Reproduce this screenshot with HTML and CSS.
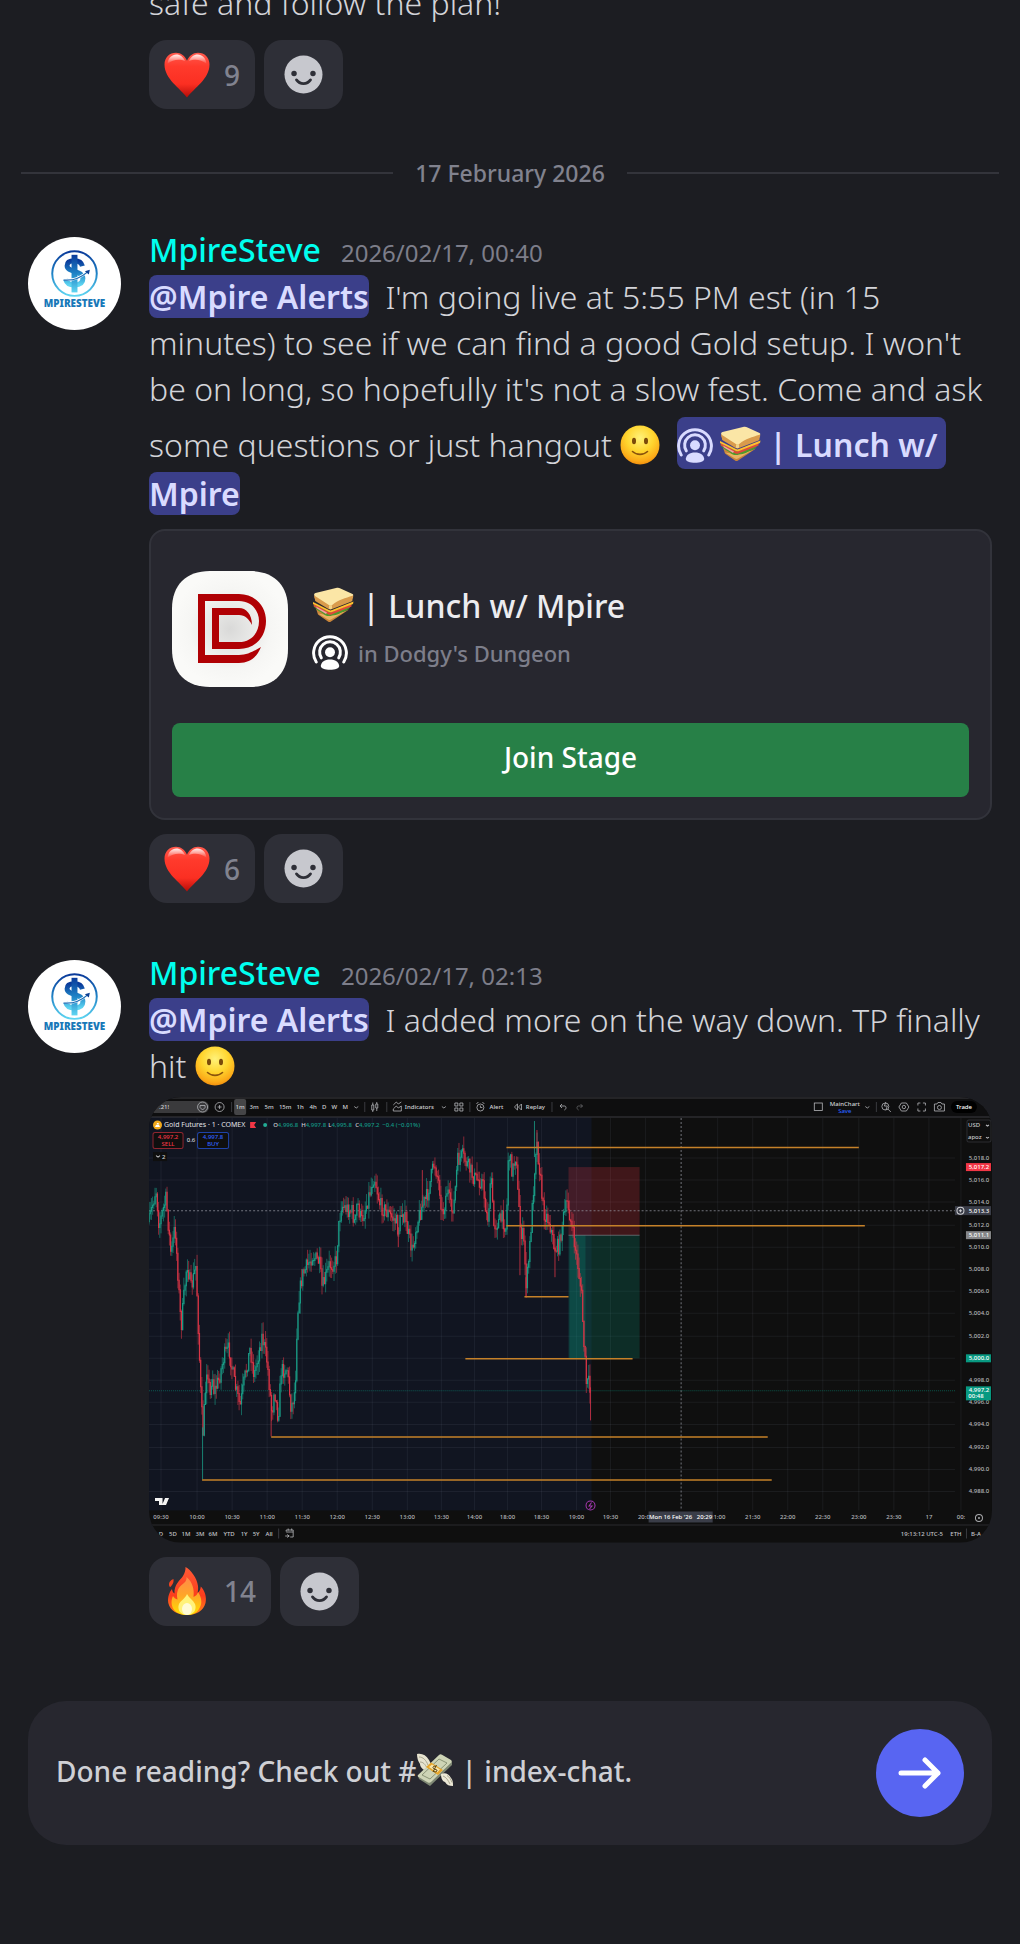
FILE: index.html
```html
<!DOCTYPE html>
<html lang="en">
<head>
  <meta charset="UTF-8">
  <meta name="viewport" content="width=device-width, initial-scale=1.0">
  <title>Mpire Alerts</title>
  <link rel="stylesheet" href="styles.css">
</head>
<body>
  <!-- shared icons -->
  <svg class="sprite" aria-hidden="true">
    <defs>
      <linearGradient id="brand" x1="0" y1="0" x2="0" y2="1">
        <stop offset="0" stop-color="#0a3a9a"/>
        <stop offset=".5" stop-color="#1f83c6"/>
        <stop offset="1" stop-color="#5fd6f2"/>
      </linearGradient>
      <linearGradient id="heartFill" x1="0" y1="0" x2="0" y2="1">
        <stop offset="0" stop-color="#ff5a4d"/>
        <stop offset=".3" stop-color="#ff3a2c"/>
        <stop offset=".7" stop-color="#fb2f22"/>
        <stop offset="1" stop-color="#b50d08"/>
      </linearGradient>
      <linearGradient id="shine" x1="0" y1="0" x2="0" y2="1">
        <stop offset="0" stop-color="#fff" stop-opacity=".9"/>
        <stop offset="1" stop-color="#fff" stop-opacity="0"/>
      </linearGradient>
      <radialGradient id="smileFill" cx=".5" cy=".32" r=".7">
        <stop offset="0" stop-color="#fff27a"/>
        <stop offset=".5" stop-color="#ffd52e"/>
        <stop offset=".85" stop-color="#fba918"/>
        <stop offset="1" stop-color="#ef8a0c"/>
      </radialGradient>
      <linearGradient id="flameFill" x1="0" y1="0" x2="0" y2="1">
        <stop offset="0" stop-color="#ff5a36"/>
        <stop offset=".6" stop-color="#fb3d1c"/>
        <stop offset="1" stop-color="#ff8a1c"/>
      </linearGradient>
      <linearGradient id="flameInner" x1="0" y1="0" x2="0" y2="1">
        <stop offset="0" stop-color="#ff8a4a"/>
        <stop offset=".5" stop-color="#ffa726"/>
        <stop offset="1" stop-color="#ffe100"/>
      </linearGradient>
      <radialGradient id="tile">
        <stop offset="0" stop-color="#d9d9d8"/>
        <stop offset=".7" stop-color="#f6f6f4"/>
        <stop offset="1" stop-color="#fafaf8"/>
      </radialGradient>
    </defs>

    <symbol id="heart" viewBox="0 0 46 46">
      <path fill="url(#heartFill)" d="M23 45.500C16 36 .500 27 .500 12.500.500 5.500 5.500.800 12 .800c5 0 9 3.200 11 8 2-4.800 6-8 11-8 6.500 0 11.500 4.700 11.500 11.700C45.500 27 30 36 23 45.500z"/>
      <path fill="url(#shine)" d="M3.500 12C4 6 8 2.500 12.300 2.500c4 0 7 2.500 8.700 6.500-5-2-12-2-17.500 3zM42.500 12C42 6 38 2.500 33.700 2.500c-4 0-7 2.500-8.700 6.500 5-2 12-2 17.500 3z"/>
    </symbol>

    <symbol id="flame" viewBox="0 0 40 50">
      <path fill="url(#flameFill)" d="M18.500 1C24 4 30 12 31 20c.3 3 0 5-.5 7 2-1.500 3.200-4 3.300-6.500C37.500 24 40 31 38.500 37 36.500 45 29 49 20 49S3 45 1.300 37C.300 31 2.500 26 5 23c.3 2 1 3.500 2.500 4.500C7 18 13 14.500 16 10c1.800-3 2.700-6 2.500-9z"/>
      <path fill="#f4441f" d="M6.500 13c.3 3-.3 4-1.500 6s-2 2.500-2.500 1.500C1 17 3.500 14 6.500 13z"/>
      <path fill="url(#flameInner)" d="M19.500 11c6 5 8 12 7 20 2.500-1 4-3 4.500-5 4 6 4.500 12 1 17-2.500 4-7 6-12 6S9 47 6.500 43C4 39 4 34 6 30c1 2 2.500 3 4.500 3.500C8.500 24 13 20 17 17c2-1.700 2.700-3.700 2.500-6z"/>
      <path fill="#fff27a" d="M20 28c2 4 6 6 8 10 2 5-1 11-8 11s-10-6-8-11c2-4 6-5 8-10z"/>
      <ellipse cx="20" cy="43" rx="5" ry="6" fill="#fffbd6"/>
    </symbol>

    <symbol id="smile" viewBox="0 0 40 40">
      <circle cx="20" cy="20" r="19.500" fill="url(#smileFill)"/>
      <ellipse cx="14" cy="16" rx="2" ry="3.200" fill="#7a4a0a"/>
      <ellipse cx="26" cy="16" rx="2" ry="3.200" fill="#7a4a0a"/>
      <path d="M12.500 26.500c4 3.800 11 3.800 15 0" fill="none" stroke="#8a530c" stroke-width="1.600" stroke-linecap="round"/>
    </symbol>

    <symbol id="sandwich" viewBox="0 0 42 35">
      <path fill="#c9853a" d="M4 21l13 8 20-7-18 12c-1 .8-2 .8-3 0L6 27z"/>
      <path fill="#e8b463" d="M6 26l10 6c1 .6 2 .6 3 0l14-8-15 4z"/>
      <path fill="#4f9a2c" d="M1 18c4 5 7 6 10 8 3 3 6 3 9 2 5 0 9-3 12-4 3-1 6-3 7-6l-20 6z"/>
      <path fill="#e0483a" d="M1.500 16.500l15 8c1 .6 2 .6 3 0l20-8v2.500l-20 8c-1 .5-2 .4-3 0L2 19z"/>
      <path fill="#f2a3a0" d="M4 19l11 6-1 1.500L5 21z"/>
      <path fill="#ffc02e" d="M1 14.500l16 8c1 .5 2 .5 3 0L41.500 14l-.5 2.500-21 8c-1 .4-2 .3-3 0L1 16.500z"/>
      <path fill="#d99b4c" d="M2.500 7c-1 2 0 3.500.5 5 0 1 0 1.500 1 2l12.500 7.500c1 .6 2 .6 3 .2L39.500 14c1-.5 1-1 1-2 .8-2 .8-3.500.5-5L17 13z"/>
      <path fill="#fbe6a6" d="M3.500 5.500L24 .500c2-.5 3-.3 4.500.5l12 5.500c1 .6 1 1.300 0 1.800-7 2.200-14 4-20 9-1.500 1.200-2.500 1.200-4 0L3 8.500c-1.500-1.200-1-2.600.5-3z"/>
      <path fill="#f3d384" d="M17 17.800v3.500c1 .6 2 .5 3 0v-3.800c-1 .8-2 .9-3 .3z"/>
    </symbol>

    <symbol id="money" viewBox="0 0 38 34">
      <path fill="#e7e3cf" d="M1 1c5-1 9 1 12 6l3 6-5 5C7 17 4 14 4 11 2 8 1 5 1 1z"/>
      <path d="M3 4c4 0 7 3 9 8M4 9c3 0 5 2 7 6" fill="none" stroke="#a9a68f" stroke-width="1"/>
      <path fill="#7f8874" d="M2 23L24 3l12 6v3L14 33 3 26z"/>
      <path fill="#ced4b6" d="M2 22L23 2c1-1 2-1 3-.3L35 7c1 1 1 1.600.3 2.400L15 29c-1 1-2 1-3 .4L2.500 24C1.500 23.500 1.500 22.600 2 22z"/>
      <path d="M6 22L23 6l8 4-17 16z" fill="none" stroke="#8b9577" stroke-width="1"/>
      <path fill="#e8a62a" d="M10 14l5-4.500L27 17l-5 5z"/>
      <path fill="#f6e6ac" d="M13 14l3-2.500 8 5-3 3z"/>
      <path d="M20 13.500c-2-1-4 .5-2.500 2 1.500 1.200 4 .8 3.500 2.500-.6 1.400-3 1-4 0M20.500 12l-3.500 7" fill="none" stroke="#5b4413" stroke-width="1"/>
      <path fill="#ece8d6" d="M25 21c4-2 8 0 10 4 2 2 2 5 2 8-4 0-6-1-8-4-3-1-4-4-4-8z"/>
      <path d="M27 23c3 1 5 4 7 8M31 22.500c2 1 4 4 5 7" fill="none" stroke="#a9a68f" stroke-width="1"/>
    </symbol>

    <symbol id="stage" viewBox="0 0 34 34">
      <path d="M4 26.500A15.500 15.500 0 1 1 30 26.500" fill="none" stroke="currentColor" stroke-width="2.800" stroke-linecap="round"/>
      <path d="M8.800 22.500A9.800 9.800 0 1 1 25.200 22.500" fill="none" stroke="currentColor" stroke-width="2.800" stroke-linecap="round"/>
      <circle cx="17" cy="17.300" r="4.700" fill="currentColor"/>
      <path fill="currentColor" d="M8.300 30c.6-3.800 3.500-6 8.700-6s8.100 2.200 8.700 6c.2 2.500-4 3.800-8.700 3.800S8.100 32.500 8.300 30z"/>
    </symbol>

    <symbol id="addReaction" viewBox="0 0 40 40">
      <circle cx="20" cy="20" r="19.500" fill="#c7c8ce"/>
      <circle cx="10.300" cy="19" r="2.800" fill="#2e2f37"/>
      <circle cx="29.700" cy="19" r="2.800" fill="#2e2f37"/>
      <path d="M12.800 25.500c3.500 5 10.900 5 14.400 0" fill="none" stroke="#2e2f37" stroke-width="2.800" stroke-linecap="round"/>
    </symbol>

    <symbol id="logo" viewBox="0 0 94 94">
      <circle cx="47" cy="47" r="47" fill="#fff"/>
      <circle cx="47" cy="37" r="22.500" fill="none" stroke="url(#brand)" stroke-width="2"/>
      <path d="M55 29.500c-1-4-4-5.500-8-5.500-5 0-7.500 2-7.500 5 0 7 16 4.500 16 13 0 4.500-3.500 6.500-8.500 6.500-5 0-8-2-9-6" fill="none" stroke="url(#brand)" stroke-width="5"/>
      <path d="M44 18h6v38h-6z" fill="url(#brand)"/>
      <path d="M36 42.500c9 2 17-1 24-7.500" fill="none" stroke="#fff" stroke-width="2.500"/>
      <path d="M36 43.500c9 1 17-2 24-8" fill="none" stroke="#1668b4" stroke-width="1.300"/>
      <path d="M57.500 34.500l5-1.500-1 5z" fill="#0c3f94"/>
      <text x="47" y="71" text-anchor="middle" class="logo-text">MPIRESTEVE</text>
    </symbol>
  </svg>

  <main class="feed">
    <article class="message first">
      <div class="content">
        <p class="text">safe and follow the plan!</p>
        <div class="reactions">
          <button class="chip"><svg class="heart" role="img" aria-label="heart"><use href="#heart"/></svg>9</button>
          <button class="chip add" aria-label="Add reaction"><svg class="face"><use href="#addReaction"/></svg></button>
        </div>
      </div>
    </article>

    <div class="divider"><span>17 February 2026</span></div>

    <article class="message">
      <svg class="avatar" role="img" aria-label="MpireSteve"><use href="#logo"/></svg>
      <div class="content">
        <header><span class="name">MpireSteve</span><time>2026/02/17, 00:40</time></header>
        <p class="text"><a href="#" class="mention">@Mpire Alerts</a>&nbsp; I'm going live at 5:55 PM est (in 15 minutes) to see if we can find a good Gold setup. I won't be on long, so hopefully it's not a slow fest. Come and ask some questions or just hangout <svg class="emoji" role="img" aria-label="slight smile"><use href="#smile"/></svg>&nbsp; <a href="#"><span class="mention channel"><svg class="stage"><use href="#stage"/></svg><svg class="sandwich" role="img" aria-label="sandwich"><use href="#sandwich"/></svg> | Lunch w/</span> <span class="mention">Mpire</span></a></p>

        <section class="card">
          <div class="card-top">
            <svg class="tile" viewBox="0 0 116 116" role="img" aria-label="Dodgy's Dungeon">
              <path fill="url(#tile)" d="M38 0h40c24 0 38 14 38 38v40c0 24-14 38-38 38H38C14 116 0 102 0 78V38C0 14 14 0 38 0z"/>
              <path fill="#b00004" d="M26 23h41c16 0 27 12 27 27 0 16-11 28-27 28H40V37h27c7 0 13 6 13 17-3-6-7-10-13-10H47v27h20c12 0 20-9 20-21 0-11-8-20-20-20H33v54h34c9 0 15-4 22-8-4 10-11 16-22 16H26z"/>
            </svg>
            <div class="card-info">
              <h2><svg class="sandwich" role="img" aria-label="sandwich"><use href="#sandwich"/></svg> | Lunch w/ Mpire</h2>
              <p><svg class="stage"><use href="#stage"/></svg>in Dodgy's Dungeon</p>
            </div>
          </div>
          <button class="join">Join Stage</button>
        </section>

        <div class="reactions">
          <button class="chip"><svg class="heart" role="img" aria-label="heart"><use href="#heart"/></svg>6</button>
          <button class="chip add" aria-label="Add reaction"><svg class="face"><use href="#addReaction"/></svg></button>
        </div>
      </div>
    </article>

    <article class="message">
      <svg class="avatar" role="img" aria-label="MpireSteve"><use href="#logo"/></svg>
      <div class="content">
        <header><span class="name">MpireSteve</span><time>2026/02/17, 02:13</time></header>
        <p class="text"><a href="#" class="mention">@Mpire Alerts</a>&nbsp; I added more on the way down. TP finally hit <svg class="emoji" role="img" aria-label="slight smile"><use href="#smile"/></svg></p>

        <svg class="chart" id="chart" viewBox="0 0 842 445" role="img" aria-label="Gold Futures chart">
          <rect width="842" height="445" fill="#0f0f0f"/>
          <rect y="20" width="442" height="393" fill="#111521"/>
          <g id="grid" stroke="#8a93a8" stroke-opacity=".1"></g>
          <rect x="419" y="70" width="71" height="68" fill="#f23645" fill-opacity=".22"/>
          <rect x="419" y="138" width="71" height="123" fill="#089981" fill-opacity=".22"/>
          <rect x="420" y="138" width="16" height="123" fill="#089981" fill-opacity=".22"/>
          <path d="M419 138h71" stroke="#8a8d96" stroke-opacity=".6"/>
          <path d="M0 293.500h805" stroke="#089981" stroke-opacity=".5" stroke-dasharray="1 1"/>
          <path d="M0 113.500h805M531.500 21v392" stroke="#9a9da6" stroke-opacity=".7" stroke-dasharray="2 2"/>
          <g id="candles"></g>
          <path d="M357 50.500h352M357 128.500h358M375 199.500h44M316 261.500h167M122 339.500h496M53 382.500h569" stroke="#c58129" stroke-width="1.500"/>

          <!-- toolbar -->
          <rect width="842" height="20" fill="#0e0e0f"/>
          <path d="M0 1h842M0 20h842" stroke="#3a3b40"/>
          <rect x="-20" y="4" width="80" height="12" rx="6" fill="#3a3a3c"/>
          <rect x="85" y="2" width="12" height="16" rx="2" fill="#454547"/>
          <path d="M82.500 5v10M215.500 5v10M237.500 5v10M320.500 5v10M402.500 5v10M726.500 5v10" stroke="#3a3b40"/>
          <g fill="none" stroke="#b5b6ba" stroke-width=".8">
            <circle cx="53.500" cy="10" r="5"/>
            <path d="M51 8.500h5v2l-2.500 2.500-2.500-2.500z"/>
            <circle cx="70.500" cy="10" r="4.500"/>
            <path d="M68.500 10h4M70.500 8v4M205 9.500l2 1.500 2-1.500M292.500 9.500l2 1.500 2-1.500M715.500 9.500l2 1.500 2-1.500"/>
            <path d="M222.500 8h2v5h-2zM223.500 5.500V8m0 5v2M226.500 7h2v4h-2zM227.500 5v2m0 4v3"/>
            <path d="M244 14h8V9l-3 2-2-2-3 3zM244 8l3-3 2 2 3-2"/>
            <path d="M305.500 6h3v3h-3zM310.500 6h3v3h-3zM305.500 11h3v3h-3zM310.500 11h3v3h-3z"/>
            <circle cx="331" cy="10.500" r="3.500"/>
            <path d="M331 8.500v2h2M327 7l2-2M335 7l-2-2M368 7l-3 3 3 3zM372 7l-3 3 3 3zM411 9h4c2 0 2 3 0 4M412.500 7l-2 2 2 2"/>
            <path d="M433 9h-4c-2 0-2 3 0 4M431 7l2 2-2 2" stroke-opacity=".5"/>
            <rect x="664.500" y="6" width="8" height="7.500"/>
            <circle cx="735.500" cy="9.500" r="3.500"/>
            <path d="M738 12l3 3M736 5l-1.500 4h3l-1.500 4"/>
            <path d="M751.500 6h5l2.500 4-2.500 4h-5L749 10z"/>
            <circle cx="754" cy="10" r="1.700"/>
            <path d="M768 8.500V6h2.500M773 6h2.500v2.500M775.500 11.500V14H773M770.500 14H768v-2.500"/>
            <path d="M784.500 7h2.500l1-1.500h3l1 1.500h2.500v7h-10z"/>
            <circle cx="789.500" cy="10.500" r="2"/>
          </g>
          <rect x="801" y="4" width="26" height="12" rx="6" fill="#000"/>
          <g class="tiny" fill="#d0d1d4">
            <text x="10" y="12">.21!</text>
            <text x="91" y="12" text-anchor="middle">1m</text>
            <text x="105" y="12" text-anchor="middle">3m</text>
            <text x="120" y="12" text-anchor="middle">5m</text>
            <text x="136" y="12" text-anchor="middle">15m</text>
            <text x="151" y="12" text-anchor="middle">1h</text>
            <text x="164" y="12" text-anchor="middle">4h</text>
            <text x="175" y="12" text-anchor="middle">D</text>
            <text x="185" y="12" text-anchor="middle">W</text>
            <text x="196" y="12" text-anchor="middle">M</text>
            <text x="270" y="12" text-anchor="middle">Indicators</text>
            <text x="347" y="12" text-anchor="middle">Alert</text>
            <text x="386" y="12" text-anchor="middle">Replay</text>
            <text x="695" y="9" text-anchor="middle">MainChart</text>
            <text x="695" y="16" text-anchor="middle" fill="#2962ff">Save</text>
            <text x="814" y="12" text-anchor="middle" fill="#fff">Trade</text>
          </g>

          <!-- symbol line -->
          <circle cx="8.500" cy="28" r="4.500" fill="#f0a81c"/>
          <path d="M6 30l1-2h3l1 2zM7.500 27.500l.5-1.500h1.500l.5 1.500z" fill="#fff"/>
          <text x="15" y="30" class="symbol" fill="#e2e3e6">Gold Futures · 1 · COMEX</text>
          <path d="M101 25h6l-2 3 2 3h-6z" fill="#f23645"/>
          <circle cx="116" cy="28" r="2" fill="#22ab94"/>
          <g class="tiny" fill="#139783">
            <text x="124" y="30"><tspan fill="#d0d1d4">O</tspan>4,996.8</text>
            <text x="152" y="30"><tspan fill="#d0d1d4">H</tspan>4,997.8</text>
            <text x="179" y="30"><tspan fill="#d0d1d4">L</tspan>4,995.8</text>
            <text x="206" y="30"><tspan fill="#d0d1d4">C</tspan>4,997.2</text>
            <text x="233" y="30">−0.4 (−0.01%)</text>
          </g>
          <rect x="4" y="35.500" width="30" height="16" rx="2" fill="#0f0f0f" stroke="#8f2630"/>
          <rect x="48.500" y="35.500" width="31" height="16" rx="2" fill="#0f0f0f" stroke="#1f43a8"/>
          <g class="tiny" text-anchor="middle">
            <text x="19" y="42" fill="#f23645">4,997.2</text>
            <text x="19" y="49" fill="#f23645">SELL</text>
            <text x="64" y="42" fill="#2f62ff">4,997.8</text>
            <text x="64" y="49" fill="#2f62ff">BUY</text>
            <text x="42" y="45" fill="#d0d1d4">0.6</text>
          </g>
          <rect x="4" y="55" width="14" height="9" fill="#0f0f0f"/>
          <path d="M7 58.500l2 1.500 2-1.500" fill="none" stroke="#c5c6ca"/>
          <text x="13" y="62" class="tiny" fill="#d0d1d4">2</text>

          <path fill="#f4f4f4" d="M6 400.500h7.500v7H10v-4H6zM16 400.500h4l-3 7h-4l2-4.500z"/>
          <circle cx="441" cy="408" r="4.500" fill="#111" stroke="#a63ab5"/>
          <path d="M442 405l-2.500 3.500h3l-2.500 3" fill="none" stroke="#a63ab5"/>

          <!-- price and time scales -->
          <g id="prices" class="tiny" text-anchor="middle" fill="#b4b5b9"></g>
          <rect x="817" y="23" width="24" height="22" rx="2" fill="none" stroke="#2c2d31"/>
          <g class="tiny" fill="#c8c9cc">
            <text x="818" y="30">USD</text>
            <text x="818" y="42">apoz</text>
          </g>
          <path d="M836 28l1.500 1 1.500-1M836 40l1.500 1 1.500-1" fill="none" stroke="#b5b6ba"/>
          <rect x="816" y="66" width="25" height="8" fill="#f23645"/>
          <rect x="805" y="109" width="36" height="9" fill="#3a3d48"/>
          <rect x="816" y="134" width="25" height="8" fill="#858688"/>
          <rect x="816" y="257" width="25" height="8" fill="#089981"/>
          <rect x="816" y="289" width="25" height="14" fill="#089981"/>
          <circle cx="810.500" cy="113.500" r="3.500" fill="none" stroke="#d0d1d4"/>
          <path d="M809 113.500h3M810.500 112v3" stroke="#d0d1d4"/>
          <g class="tiny" text-anchor="middle" fill="#fff">
            <text x="829" y="72">5,017.2</text>
            <text x="829" y="116">5,013.3</text>
            <text x="829" y="140">5,011.1</text>
            <text x="829" y="263">5,000.0</text>
            <text x="829" y="295">4,997.2</text>
            <text x="826" y="301">00:48</text>
          </g>
          <path d="M0 427.500h842" stroke="#2a2b2f"/>
          <g id="times" class="tiny" text-anchor="middle" fill="#b4b5b9"></g>
          <rect x="499" y="414" width="64" height="11" fill="#3a3d48"/>
          <text x="531" y="422" text-anchor="middle" class="tiny" fill="#fff">Mon 16 Feb '26 &#160; 20:29</text>
          <circle cx="829" cy="420.500" r="3.500" fill="none" stroke="#a9aaad"/>
          <circle cx="829" cy="420.500" r="1" fill="#a9aaad"/>
          <g class="tiny" fill="#c3c4c8" text-anchor="middle">
            <text x="12" y="438">D</text>
            <text x="24" y="438">5D</text>
            <text x="37" y="438">1M</text>
            <text x="51" y="438">3M</text>
            <text x="64" y="438">6M</text>
            <text x="80" y="438">YTD</text>
            <text x="95" y="438">1Y</text>
            <text x="107" y="438">5Y</text>
            <text x="120" y="438">All</text>
            <text x="772" y="438">19:13:12 UTC-5</text>
            <text x="806" y="438">ETH</text>
            <text x="826" y="438">B-A</text>
          </g>
          <path d="M129.500 431v10M816.500 431v10" stroke="#3a3b40"/>
          <path d="M137 434v-1.500h7v7h-3M137 434.500h7M139 431v2M142.500 431v2M136 438.500h4M138 437l2 1.500-2 1.500" fill="none" stroke="#b5b6ba" stroke-width=".8"/>
        </svg>

        <div class="reactions">
          <button class="chip"><svg class="flame" role="img" aria-label="fire"><use href="#flame"/></svg>14</button>
          <button class="chip add" aria-label="Add reaction"><svg class="face"><use href="#addReaction"/></svg></button>
        </div>
      </div>
    </article>
  </main>

  <footer class="next">
    <p>Done reading? Check out #<svg class="money" role="img" aria-label="money with wings"><use href="#money"/></svg> | index-chat.</p>
    <button class="go" aria-label="Go to index-chat">
      <svg viewBox="0 0 44 32"><path d="M3 16h37M27 3l13 13-13 13" fill="none" stroke="#fff" stroke-width="5" stroke-linecap="round" stroke-linejoin="round"/></svg>
    </button>
  </footer>

  <script>
    const ns = 'http://www.w3.org/2000/svg'
    const add = (parent, tag, attrs, text) => {
      const el = document.createElementNS(ns, tag)
      for (const key in attrs) el.setAttribute(key, attrs[key])
      if (text) el.textContent = text
      document.getElementById(parent).append(el)
    }

    // time scale
    const times = [
      [12, '09:30'], [48, '10:00'], [83, '10:30'], [118, '11:00'], [153, '11:30'], [188, '12:00'],
      [223, '12:30'], [258, '13:00'], [292, '13:30'], [325, '14:00'], [358, '18:00'], [392, '18:30'],
      [427, '19:00'], [461, '19:30'], [496, '20:00'], [568, '21:00'], [603, '21:30'], [638, '22:00'],
      [673, '22:30'], [709, '23:00'], [744, '23:30'], [779, '17'], [811, '00:']
    ]
    for (const [x, label] of times) {
      add('grid', 'path', { d: `M${x} 21v392` })
      add('times', 'text', { x, y: 422 }, label)
    }

    // price scale, 2 points a step
    for (let i = 0; i < 16; i++) {
      const y = Math.round(61 + i * 22.2)
      add('grid', 'path', { d: `M0 ${y}h805` })
      // 5,000.0 has its own tag
      if (i !== 9) add('prices', 'text', { x: 829, y: y + 2 }, (5018 - i * 2).toLocaleString('en-US') + '.0')
    }

    // price path: x, y
    const points = [
      [0, 124], [7, 91], [10, 128], [17, 101], [22, 158], [26, 128], [32, 230], [38, 164], [42, 191], [47, 168],
      [49, 224], [52, 304], [54, 334], [58, 264], [61, 301], [63, 274], [65, 294], [70, 281], [75, 258], [80, 251],
      [85, 284], [91, 309], [95, 284], [101, 251], [105, 278], [113, 238], [118, 264], [123, 318], [125, 288],
      [129, 321], [132, 273], [138, 271], [142, 311], [146, 291], [148, 221], [150, 198], [153, 178], [163, 158],
      [170, 164], [173, 191], [180, 168], [187, 164], [189, 134], [192, 108], [203, 114], [206, 128], [208, 104],
      [212, 124], [217, 108], [225, 78], [231, 108], [237, 114], [247, 124], [249, 134], [253, 111], [263, 154],
      [267, 128], [273, 108], [278, 98], [285, 64], [290, 88], [293, 118], [298, 91], [302, 114], [305, 104],
      [308, 64], [313, 58], [320, 71], [325, 81], [333, 84], [338, 124], [342, 81], [344, 128], [353, 121],
      [357, 131], [359, 54], [363, 74], [367, 54], [368, 91], [371, 131], [374, 141], [377, 188], [380, 154],
      [383, 108], [387, 41], [390, 71], [394, 114], [400, 124], [405, 151], [410, 148], [413, 124], [418, 104],
      [423, 134], [428, 164], [432, 198], [434, 240], [436, 271], [437, 288], [439, 284], [441, 298]
    ]
    let seed = 7
    const random = () => (seed = seed * 16807 % 2147483647) / 2147483647
    let open = points[0][1]
    let n = 0
    for (let x = 0; x < 441; x += 1.2) {
      while (points[n + 1][0] < x) n++
      const [x1, y1] = points[n]
      const [x2, y2] = points[n + 1]
      const close = y1 + (y2 - y1) * (x - x1) / (x2 - x1) + (random() - 0.5) * 16
      const top = Math.min(open, close)
      const bottom = Math.max(open, close)
      const stroke = close < open ? '#1a9c86' : '#d93546'
      add('candles', 'path', { d: `M${x} ${top - random() * 12}V${bottom + random() * 12}`, stroke, 'stroke-width': 0.6 })
      add('candles', 'path', { d: `M${x} ${top}V${bottom + 1}`, stroke, 'stroke-width': 1.2 })
      open = close
    }
    // long wicks
    add('candles', 'path', { d: 'M53.5 330V382M385 60V24', stroke: '#1a9c86', 'stroke-width': 0.8 })
    add('candles', 'path', { d: 'M122 300V339M376.500 180V199M387.500 50V33M441 290V323M405.500 150V180M370.500 130V178M273 110V73M249 130V150', stroke: '#d93546', 'stroke-width': 0.8 })
  </script>
</body>
</html>
```
FILE: styles.css
```css
* {
  box-sizing: border-box;
}

body {
  margin: 0;
  background: #1c1d22;
  color: #d3d4d9;
  font-family: "Noto Sans", "Open Sans", sans-serif;
  font-size: 32px;
  font-weight: 330;
  line-height: 46px;
  overflow-x: hidden;
}

p,
h2 {
  margin: 0;
}

a {
  color: inherit;
  text-decoration: none;
}

button {
  border: 0;
  font-family: inherit;
  cursor: pointer;
}

.sprite {
  position: absolute;
  width: 0;
  height: 0;
}

/* the feed is scrolled, its first line is cut by the window */
.feed {
  margin-top: -20px;
}

.message {
  display: flex;
  gap: 28px;
  padding: 0 28px;
  margin-top: 48px;
}

.message.first {
  margin-top: 0;
  padding-left: 149px;
}

.content {
  flex: 1;
  min-width: 0;
}

.avatar {
  flex: none;
  width: 93px;
  height: 93px;
  margin-top: 9px;
}

.logo-text {
  font-size: 10px;
  font-weight: 900;
  fill: #1878b8;
}

header {
  display: flex;
  align-items: baseline;
  gap: 20px;
  line-height: 43px;
}

.name {
  color: #00ffef;
  font-weight: 500;
}

time {
  color: #7d7e8a;
  font-size: 24px;
  font-weight: 400;
}

.mention {
  background: #3b3f8a;
  border-radius: 8px;
  color: #d9dbff;
  font-weight: 600;
}

.mention.channel {
  display: inline-block;
  margin: 5px 0 2px;
  padding: 5px 8px 1px 0;
}

.emoji {
  width: 40px;
  height: 40px;
  vertical-align: -8px;
}

.stage {
  width: 36px;
  height: 36px;
  vertical-align: -6px;
  margin-right: 6px;
}

.sandwich {
  width: 42px;
  height: 36px;
  vertical-align: -5px;
}

.divider {
  display: flex;
  align-items: center;
  gap: 22px;
  margin: 47px 21px 38px;
  color: #81828e;
  font-size: 23px;
  font-weight: 500;
  line-height: 34px;
}

.divider::before,
.divider::after {
  content: "";
  flex: 1;
  height: 2px;
  background: #33343b;
}

.divider + .message {
  margin-top: 0;
}

.reactions {
  display: flex;
  gap: 9px;
  margin-top: 14px;
}

.chip {
  display: flex;
  align-items: center;
  gap: 14px;
  height: 69px;
  padding: 0 15px;
  border-radius: 18px;
  background: #2e2f37;
  color: #81838f;
  font-size: 28px;
  font-weight: 500;
}

.chip.add {
  padding: 0 20px;
}

.heart {
  width: 46px;
  height: 46px;
}

.flame {
  width: 46px;
  height: 50px;
}

.face {
  width: 39px;
  height: 39px;
}

.card {
  margin-top: 12px;
  padding: 40px 21px 21px;
  border: 2px solid #32333b;
  border-radius: 16px;
  background: #27272f;
}

.card-top {
  display: flex;
  align-items: center;
  gap: 24px;
}

.tile {
  flex: none;
  width: 116px;
  height: 116px;
}

.card h2 {
  color: #ececef;
  font-size: 32px;
  font-weight: 500;
  line-height: 48px;
}

.card p {
  color: #7d7e8a;
  font-size: 22px;
  font-weight: 500;
}

.card p .stage {
  color: #fff;
  vertical-align: -8px;
  margin-right: 10px;
}

.join {
  display: block;
  width: 100%;
  height: 74px;
  margin-top: 36px;
  padding: 0 0 6px;
  border-radius: 8px;
  background: #278047;
  color: #fff;
  font-size: 28px;
  font-weight: 500;
}

.chart {
  display: block;
  width: 100%;
  margin-top: 8px;
  border-radius: 32px;
}

.tiny {
  font-size: 6px;
  font-weight: 500;
}

.symbol {
  font-size: 7px;
  font-weight: 400;
}

.next {
  display: flex;
  align-items: center;
  justify-content: space-between;
  margin: 75px 28px 98px;
  padding: 28px;
  border-radius: 38px;
  background: #27272f;
  color: #cfd0d5;
  font-size: 28px;
  font-weight: 500;
}

.next p {
  padding-bottom: 3px;
}

.money {
  width: 38px;
  height: 34px;
  vertical-align: -5px;
}

.go {
  display: flex;
  align-items: center;
  justify-content: center;
  width: 88px;
  height: 88px;
  padding: 0;
  border-radius: 50%;
  background: #5865f2;
}

.go svg {
  width: 44px;
  height: 32px;
}
```
